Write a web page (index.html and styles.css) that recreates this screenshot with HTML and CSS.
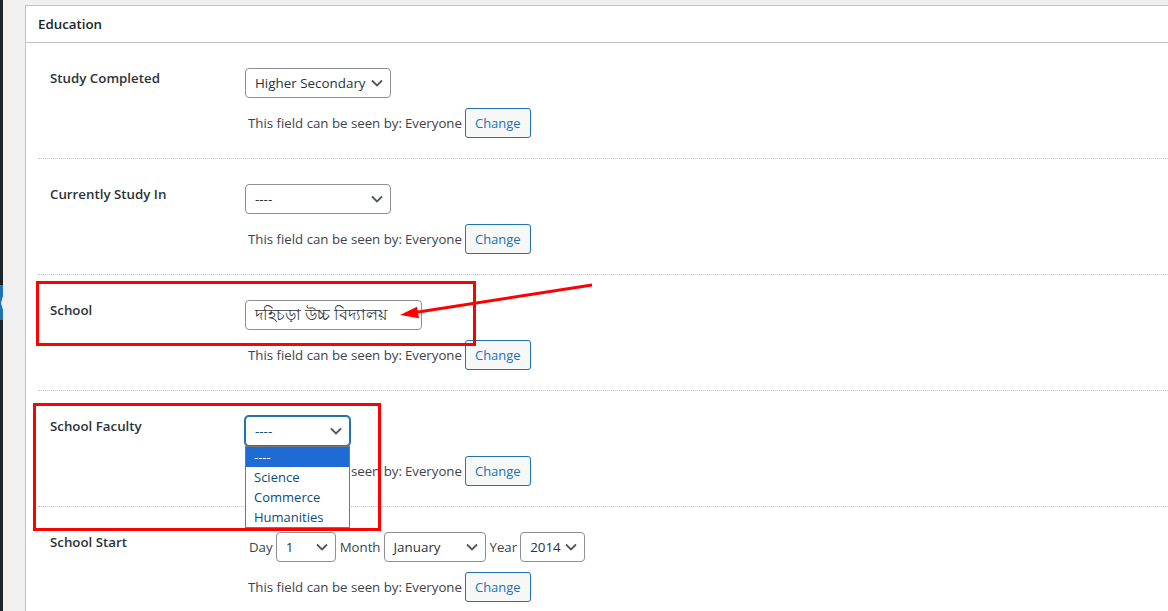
FILE: index.html
```html
<!DOCTYPE html>
<html lang="en">
<head>
<meta charset="utf-8">
<title>Education</title>
<link rel="stylesheet" href="styles.css">
</head>
<body>
<div class="page">
  <div class="adminmenu"><span class="menu-current"></span></div>
  <main class="content">
    <section class="card">
      <h2 class="card-title">Education</h2>
      <div class="card-body">

        <div class="field-row">
          <div class="field-label">Study Completed</div>
          <div class="field-control">
            <div class="select w-study">
              <span class="select-text">Higher Secondary</span>
              <svg class="chev" viewBox="0 0 12 8"><path d="M1 1.5l5 5 5-5"/></svg>
            </div>
            <p class="visibility">This field can be seen by: <span>Everyone</span> <button class="button">Change</button></p>
          </div>
        </div>

        <div class="field-row">
          <div class="field-label">Currently Study In</div>
          <div class="field-control">
            <div class="select w-study">
              <span class="select-text">----</span>
              <svg class="chev" viewBox="0 0 12 8"><path d="M1 1.5l5 5 5-5"/></svg>
            </div>
            <p class="visibility">This field can be seen by: <span>Everyone</span> <button class="button">Change</button></p>
          </div>
        </div>

        <div class="field-row">
          <div class="field-label">School</div>
          <div class="field-control">
            <div class="text-input">দহিচড়া উচ্চ বিদ্যালয়</div>
            <p class="visibility">This field can be seen by: <span>Everyone</span> <button class="button">Change</button></p>
          </div>
        </div>

        <div class="field-row">
          <div class="field-label">School Faculty</div>
          <div class="field-control">
            <div class="select-wrap">
              <div class="select w-faculty is-focused">
                <span class="select-text">----</span>
                <svg class="chev" viewBox="0 0 12 8"><path d="M1 1.5l5 5 5-5"/></svg>
              </div>
              <ul class="dropdown">
                <li class="is-active">----</li>
                <li>Science</li>
                <li>Commerce</li>
                <li>Humanities</li>
              </ul>
            </div>
            <p class="visibility">This field can be seen by: <span>Everyone</span> <button class="button">Change</button></p>
          </div>
        </div>

        <div class="field-row">
          <div class="field-label">School Start</div>
          <div class="field-control">
            <div class="date-fields">
              <span class="date-label">Day</span>
              <div class="select w-day">
                <span class="select-text">1</span>
                <svg class="chev" viewBox="0 0 12 8"><path d="M1 1.5l5 5 5-5"/></svg>
              </div>
              <span class="date-label">Month</span>
              <div class="select w-month">
                <span class="select-text">January</span>
                <svg class="chev" viewBox="0 0 12 8"><path d="M1 1.5l5 5 5-5"/></svg>
              </div>
              <span class="date-label">Year</span>
              <div class="select w-year">
                <span class="select-text">2014</span>
                <svg class="chev" viewBox="0 0 12 8"><path d="M1 1.5l5 5 5-5"/></svg>
              </div>
            </div>
            <p class="visibility">This field can be seen by: <span>Everyone</span> <button class="button">Change</button></p>
          </div>
        </div>

      </div>
    </section>
  </main>

  <div class="annotations">
    <div class="mark mark-school"></div>
    <div class="mark mark-faculty"></div>
    <svg class="arrow" width="1168" height="611" viewBox="0 0 1168 611">
      <line x1="592" y1="285" x2="415" y2="312.6" stroke="#ff0000" stroke-width="3"/>
      <polygon points="400,315 419,318.2 417,306.8" fill="#ff0000"/>
    </svg>
  </div>
</div>
</body>
</html>
```

FILE: styles.css
```css
html, body {
  margin: 0;
  height: 100%;
  overflow: hidden;
}

body {
  background: #f0f0f1;
  font-family: "Open Sans", "Noto Sans", sans-serif;
  font-size: 13.25px;
  color: #3c434a;
}

.page {
  position: relative;
  display: flex;
  min-height: 611px;
}

.adminmenu {
  position: relative;
  flex: none;
  width: 3px;
  background: #1d2327;
}

.menu-current {
  position: absolute;
  top: 285px;
  left: 0;
  width: 3px;
  height: 35px;
  background: #2271b1;
}

.menu-current::after {
  content: "";
  position: absolute;
  right: 0;
  top: 11px;
  width: 0;
  height: 0;
  border-top: 7px solid transparent;
  border-bottom: 7px solid transparent;
  border-right: 2px solid #f0f0f1;
}

.content {
  flex: 1;
  padding: 5px 0 0 22px;
  min-width: 0;
}

.card {
  background: #fff;
  border: 1px solid #c3c4c7;
  margin-right: -3px;
  min-height: 700px;
}

.card-title {
  margin: 0;
  height: 36px;
  display: flex;
  align-items: center;
  padding: 0 12px;
  border-bottom: 1px solid #c3c4c7;
  font-size: 13.3px;
  font-weight: 600;
  color: #1d2327;
}

.card-body {
  padding-left: 12px;
}

.field-row {
  display: flex;
  padding: 25px 0 20px;
  border-bottom: 1px dotted #c3c4c7;
}

.field-label {
  flex: 0 0 207px;
  box-sizing: border-box;
  padding-left: 12px;
  font-size: 13.3px;
  line-height: 20px;
  font-weight: 600;
  color: #2c3338;
}

.field-control {
  display: flex;
  flex-direction: column;
  align-items: flex-start;
}

.select {
  display: flex;
  align-items: center;
  box-sizing: border-box;
  height: 30px;
  padding: 0 7px 0 9px;
  border: 1px solid #8c8f94;
  border-radius: 4px;
  background: #fff;
  font-size: 13.4px;
  color: #2c3338;
}

.select-text {
  flex: 1;
  white-space: nowrap;
}

.chev {
  flex: none;
  width: 12px;
  height: 8px;
  fill: none;
  stroke: #50575e;
  stroke-width: 1.8;
}

.w-study { width: 146px; }
.w-faculty { width: 105px; }
.w-day { width: 60px; }
.w-month { width: 102px; }
.w-year { width: 65px; }

.select.is-focused {
  border-color: #2271b1;
  box-shadow: 0 0 0 1px #2271b1;
  color: #0a4b78;
}

.select-wrap {
  position: relative;
}

.dropdown {
  position: absolute;
  top: 100%;
  left: 0;
  z-index: 2;
  width: 105px;
  box-sizing: border-box;
  margin: 0;
  padding: 0;
  list-style: none;
  background: #fff;
  border: 1px solid #767676;
  font-size: 13px;
}

.dropdown li {
  height: 20px;
  line-height: 20px;
  padding-left: 8px;
  color: #0a4b78;
}

.dropdown li.is-active {
  background: #1e6bd6;
  color: #fff;
}

.text-input {
  display: flex;
  align-items: center;
  box-sizing: border-box;
  width: 177px;
  height: 30px;
  padding: 0 9px;
  border: 1px solid #8c8f94;
  border-radius: 4px;
  background: #fff;
  font-size: 16px;
  color: #2c3338;
  white-space: nowrap;
}

.visibility {
  display: flex;
  align-items: center;
  gap: 3px;
  margin: 10px 0 0;
  padding-left: 3px;
  white-space: nowrap;
}

.button {
  box-sizing: border-box;
  height: 30px;
  padding: 0 9px;
  border: 1px solid #2271b1;
  border-radius: 3px;
  background: #f6f7f7;
  color: #2271b1;
  font: inherit;
  font-size: 13px;
  line-height: 28px;
}

.date-fields {
  display: flex;
  align-items: center;
  padding-left: 4px;
}

.date-label {
  margin-right: 3px;
}

.date-fields .select {
  margin-right: 4px;
}

.annotations {
  position: absolute;
  inset: 0;
  pointer-events: none;
}

.mark {
  position: absolute;
  box-sizing: border-box;
  border: 3px solid #ff0000;
}

.mark-school {
  left: 36px;
  top: 281px;
  width: 440px;
  height: 65px;
}

.mark-faculty {
  left: 33px;
  top: 403px;
  width: 348px;
  height: 128px;
}

.arrow {
  position: absolute;
  left: 0;
  top: 0;
}
```
